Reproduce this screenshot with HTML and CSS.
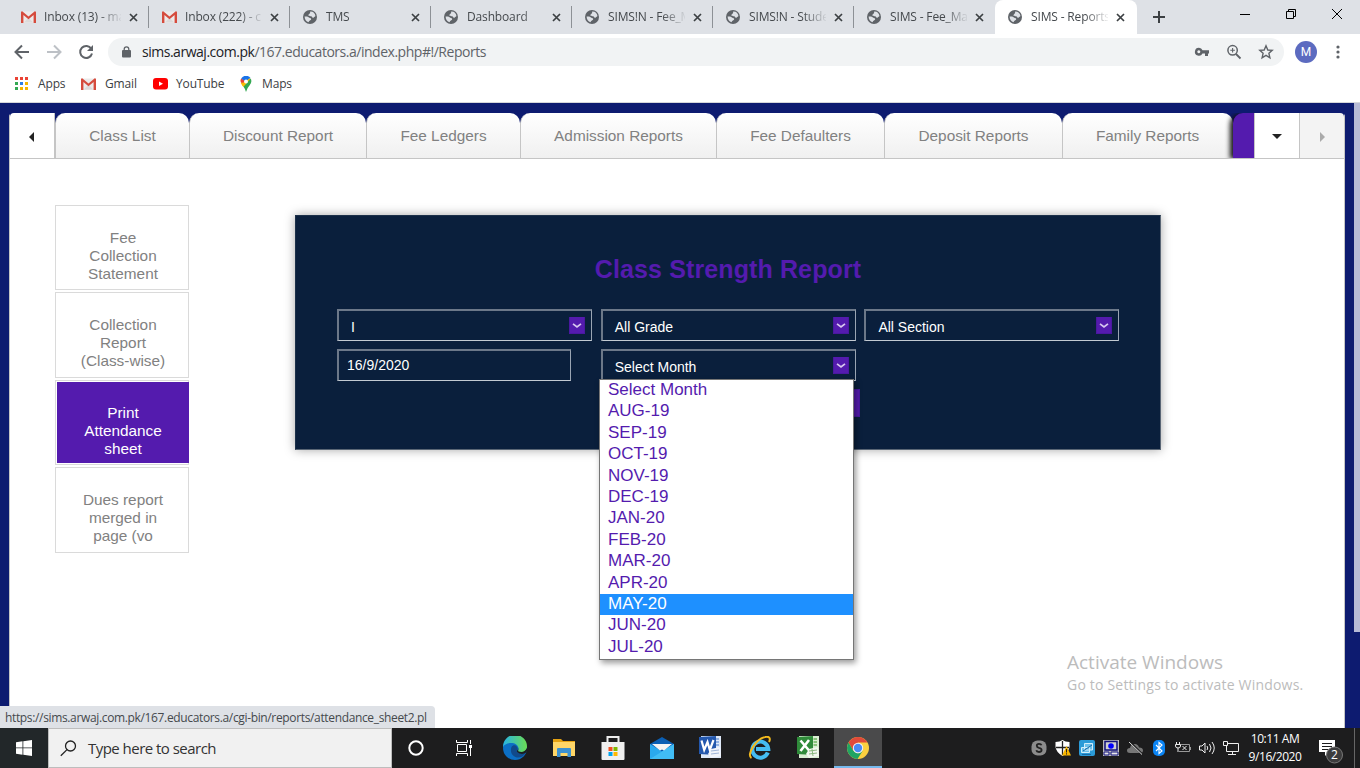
FILE: index.html
```html
<!DOCTYPE html>
<html lang="en">
<head>
<meta charset="utf-8">
<title>SIMS - Reports</title>
<link rel="stylesheet" href="styles.css">
</head>
<body>
<svg class="defs" width="0" height="0">
  <symbol id="globe" viewBox="0 0 14 14"><circle cx="7" cy="7" r="7" fill="#5f6368"/><path d="M7.200 1.600C10 1.300 12.200 3.500 12.400 5.800 12.400 7 11.600 6.400 10.800 7.400 9.800 8.200 8.600 7.200 8.600 6.200 7.400 6.200 6 6.400 5.400 5.600 5.200 4 7.400 4.200 7.200 1.600ZM1.600 6.600C3.600 6.200 5.400 6.800 6.200 7.800 7.800 8 8.600 8.600 8 9.800 7 10.600 6 10.600 5.600 12.300 3.200 11.600 1.600 9.400 1.600 6.600Z" fill="#dee1e6"/></symbol>
  <symbol id="gmail" viewBox="0 0 15 12"><path d="M1 .5H14V12H1Z" fill="#eceaea"/><path d="M3 11.500 7.500 6.500 12 11.500Z" fill="#dcdada"/><path d="M0 1.200Q0 .2 1.200 .2L7.500 5.600 13.800 .2Q15 .2 15 1.200V12H12.600V4L7.500 8.200 2.400 4V12H0Z" fill="#d54b3d"/></symbol>
  <symbol id="close" viewBox="0 0 9 9"><path d="M1 1 8 8M8 1 1 8" stroke="#3c4043" stroke-width="1.700" fill="none"/></symbol>
  <symbol id="chev" viewBox="0 0 16 17"><rect width="16" height="17" fill="#4a18a0"/><rect x="1" width="14" height="16" fill="#541bae"/><path d="M4 6.800 8 10 12 6.800" fill="none" stroke="#d8c8f0" stroke-width="1.700"/></symbol>
</svg>

<div class="tabstrip">
  <div class="tab"><svg class="fav mail"><use href="#gmail"/></svg><span class="tab-title">Inbox (13) - ma</span><svg class="x"><use href="#close"/></svg></div>
  <div class="tab"><svg class="fav mail"><use href="#gmail"/></svg><span class="tab-title">Inbox (222) - c</span><svg class="x"><use href="#close"/></svg></div>
  <div class="tab"><svg class="fav"><use href="#globe"/></svg><span class="tab-title">TMS</span><svg class="x"><use href="#close"/></svg></div>
  <div class="tab"><svg class="fav"><use href="#globe"/></svg><span class="tab-title">Dashboard</span><svg class="x"><use href="#close"/></svg></div>
  <div class="tab"><svg class="fav"><use href="#globe"/></svg><span class="tab-title">SIMS!N - Fee_M</span><svg class="x"><use href="#close"/></svg></div>
  <div class="tab"><svg class="fav"><use href="#globe"/></svg><span class="tab-title">SIMS!N - Stude</span><svg class="x"><use href="#close"/></svg></div>
  <div class="tab plain"><svg class="fav"><use href="#globe"/></svg><span class="tab-title">SIMS - Fee_Ma</span><svg class="x"><use href="#close"/></svg></div>
  <div class="tab active"><svg class="fav"><use href="#globe"/></svg><span class="tab-title">SIMS - Reports</span><svg class="x"><use href="#close"/></svg></div>
  <svg class="newtab" viewBox="0 0 12 12"><path d="M6 0V12M0 6H12" stroke="#3c4043" stroke-width="2"/></svg>
  <div class="winctl">
    <svg width="46" height="28"><path d="M18 14.500H28" stroke="#000"/></svg>
    <svg width="46" height="28"><path d="M18.500 11.500H25.500V18.500H18.500ZM20.500 11V9.500H27.500V16.500H26" stroke="#000" fill="none"/></svg>
    <svg width="46" height="28"><path d="M18 9 28 19M28 9 18 19" stroke="#000" fill="none"/></svg>
  </div>
</div>

<div class="toolbar">
  <svg class="nav" viewBox="0 0 16 16"><path d="M15 8H2M8 1.500 1.500 8 8 14.500" stroke="#5f6368" stroke-width="2" fill="none"/></svg>
  <svg class="nav" viewBox="0 0 16 16"><path d="M1 8H14M8 1.500 14.500 8 8 14.500" stroke="#bdc1c6" stroke-width="2" fill="none"/></svg>
  <svg class="nav" viewBox="0 0 16 16"><path d="M13.300 4.800A6 6 0 1 0 14 9.500" stroke="#5f6368" stroke-width="2" fill="none"/><path d="M15 1V7H9Z" fill="#5f6368"/></svg>
  <div class="omnibox">
    <svg width="9" height="12" viewBox="0 0 9 12"><path d="M2.200 5V3.200a2.300 2.300 0 0 1 4.600 0V5" stroke="#5f6368" stroke-width="1.300" fill="none"/><rect y="4" width="9" height="7.500" rx="1" fill="#5f6368"/></svg>
    <span class="url"><b>sims.arwaj.com.pk</b>/167.educators.a/index.php#!/Reports</span>
    <svg width="16" height="16" viewBox="0 0 16 16"><path fill="#5f6368" fill-rule="evenodd" d="M5 3.800a4 4 0 0 1 3.500 2.500H15V9.500H14V12H11V9.500H8.500A4 4 0 1 1 5 3.800ZM4.800 6.300a1.500 1.500 0 1 0 .01 0Z"/></svg>
    <svg width="16" height="16" viewBox="0 0 16 16"><g fill="none" stroke="#5f6368"><circle cx="6.600" cy="6.300" r="4.700" stroke-width="1.500"/><path d="M10 10 14.500 14.500" stroke-width="1.800"/><path d="M6.600 4V8.600M4.300 6.300H8.900" stroke-width="1.100"/></g></svg>
    <svg width="16" height="16" viewBox="0 0 16 16"><path d="M8 1.800 9.800 6 14.200 6.400 10.900 9.300 11.900 13.800 8 11.400 4.100 13.800 5.100 9.300 1.800 6.400 6.200 6Z" fill="none" stroke="#5f6368" stroke-width="1.400"/></svg>
  </div>
  <div class="avatar">M</div>
  <svg class="kebab" viewBox="0 0 4 14"><g fill="#5f6368"><circle cx="2" cy="2" r="1.600"/><circle cx="2" cy="7" r="1.600"/><circle cx="2" cy="12" r="1.600"/></g></svg>
</div>

<div class="bookmarks">
  <svg width="13" height="13" viewBox="0 0 13 13"><path d="M0 0h3v3H0zM5 0h3v3H5zM10 0h3v3h-3z" fill="#ea4335"/><path d="M0 5h3v3H0z" fill="#34a853"/><path d="M5 5h3v3H5z" fill="#2b7de9"/><path d="M10 5h3v3h-3zM5 10h3v3H5zM10 10h3v3h-3z" fill="#f5b400"/><path d="M0 10h3v3H0z" fill="#34a853"/></svg><span class="bm apps">Apps</span>
  <svg width="15" height="12"><use href="#gmail"/></svg><span class="bm gm">Gmail</span>
  <svg width="15" height="12" viewBox="0 0 15 12"><rect width="15" height="11.500" rx="3" fill="#f00"/><path d="M6 3.500V8L10 5.750Z" fill="#fff"/></svg><span class="bm yt">YouTube</span>
  <svg width="12" height="16" viewBox="0 0 12 16"><path d="M1.300 2.500 6 5 3 8.500Q0 6 .5 4Z" fill="#ea4335"/><path d="M1.200 2.500A5.600 5.600 0 0 1 10.500 2L6 6Z" fill="#1a73e8"/><path d="M.8 7Q2 10 4 11L10.800 3Q9 1 6 6Z" fill="#fbbc04"/><path d="M10.700 2.500Q12.500 6 9.500 9.500 7 12 6 16 5.300 13 3.500 10.800Z" fill="#34a853"/><circle cx="6" cy="5.600" r="2" fill="#fff"/></svg><span class="bm">Maps</span>
</div>

<main class="page">
  <section class="sheet">
    <nav class="report-tabs">
      <div class="scroll left"><i class="tri tri-left"></i></div>
      <div class="rtab w1">Class List</div>
      <div class="rtab w2">Discount Report</div>
      <div class="rtab w3">Fee Ledgers</div>
      <div class="rtab w4">Admission Reports</div>
      <div class="rtab w5">Fee Defaulters</div>
      <div class="rtab w6">Deposit Reports</div>
      <div class="rtab w7">Family Reports</div>
      <div class="rtab-current"></div>
      <div class="scroll"><i class="tri tri-down"></i></div>
      <div class="scroll off"><i class="tri tri-right"></i></div>
    </nav>
    <div class="content">
      <aside class="side">
        <a class="side-item">Fee<br>Collection<br>Statement</a>
        <a class="side-item">Collection<br>Report<br>(Class-wise)</a>
        <a class="side-item on"><span>Print<br>Attendance<br>sheet</span></a>
        <a class="side-item">Dues report<br>merged in<br>page (vo</a>
      </aside>
      <form class="panel">
        <h1 class="panel-title">Class Strength Report</h1>
        <div class="fields">
          <div class="field">I<svg><use href="#chev"/></svg></div>
          <div class="field">All Grade<svg><use href="#chev"/></svg></div>
          <div class="field">All Section<svg><use href="#chev"/></svg></div>
          <div class="field text">16/9/2020</div>
          <div class="field">Select Month<svg><use href="#chev"/></svg>
            <ul class="options">
              <li>Select Month</li><li>AUG-19</li><li>SEP-19</li><li>OCT-19</li><li>NOV-19</li><li>DEC-19</li><li>JAN-20</li><li>FEB-20</li><li>MAR-20</li><li>APR-20</li><li class="hover">MAY-20</li><li>JUN-20</li><li>JUL-20</li>
            </ul>
          </div>
        </div>
        <div class="submit"></div>
      </form>
    </div>
  </section>
  <div class="scrollbar"></div>
  <div class="status">https://sims.arwaj.com.pk/167.educators.a/cgi-bin/reports/attendance_sheet2.pl</div>
  <div class="watermark"><div class="wm1">Activate Windows</div><div class="wm2">Go to Settings to activate Windows.</div></div>
</main>

<footer class="taskbar">
  <div class="start"><svg width="16" height="16" viewBox="0 0 16 16"><path d="M0 2.300 6.500 1.300V7.500H0ZM7.300 1.200 16 0V7.500H7.300ZM0 8.300H6.500V14.700L0 13.700ZM7.300 8.300H16V16L7.300 14.800Z" fill="#fff"/></svg></div>
  <div class="search"><svg width="17" height="17" viewBox="0 0 17 17"><circle cx="10.500" cy="6" r="5" fill="none" stroke="#222" stroke-width="1.300"/><path d="M7 9.600 .8 15.800" stroke="#222" stroke-width="1.300"/></svg><span>Type here to search</span></div>
  <div class="tb"><svg width="16" height="16" viewBox="0 0 16 16"><circle cx="8" cy="8" r="6.700" fill="none" stroke="#fff" stroke-width="2"/></svg></div>
  <div class="tb"><svg width="17" height="16" viewBox="0 0 17 16"><path d="M.5 0V2.500H11.500V0M.5 16V13.500H11.500V16M1.500 4.500H10.500V11.500H1.500ZM14.500 0V4M14.500 8V16" fill="none" stroke="#fff"/><path d="M13 5h3v3h-3z" fill="#fff"/></svg></div>
  <div class="apps-row">
    <div class="app"><svg width="24" height="24" viewBox="0 0 24 24"><defs><linearGradient id="eg"><stop offset="0" stop-color="#27b3e5"/><stop offset="1" stop-color="#6bdc53"/></linearGradient></defs><circle cx="12" cy="12" r="12" fill="#0c6fc5"/><path d="M0 11A12 12 0 0 1 24 10.500C24 15 20 17.500 15.500 16 14 15.500 15.500 14 15.500 12.500 15.300 9 12 7 8 7 4 7 1 9 0 11Z" fill="url(#eg)"/><path d="M8.500 11C10 8.500 13 9 14 11 16 13 13 14 14.500 16 17 18.500 21 17 22.800 16.700 20 21 16 22.500 12.500 21 8.500 19.500 7 15 8.500 11Z" fill="#114a8b"/><path d="M15.400 11.500C15.400 14 13 15 14.500 16.300 18 19 21.500 17.600 22.800 16.800L24 15 24 12C22 16 19 16.500 15.700 15.500 14.800 15 15.500 13.500 15.400 11.500Z" fill="#1d1d1e"/></svg></div>
    <div class="app"><svg width="22" height="20" viewBox="0 0 22 20"><path d="M0 1H8L10 3H22V18H0Z" fill="#e5a212"/><path d="M0 4H22V18H0Z" fill="#ffd667"/><path d="M4 19V11Q4 10 5 10H17Q18 10 18 11V19H14.500V15H7.500V19Z" fill="#3c91d0"/></svg></div>
    <div class="app"><svg width="24" height="24" viewBox="0 0 24 24"><path d="M6.500 7V1H17.500V7" fill="none" stroke="#eee" stroke-width="2"/><path d="M.5 6H23.500V23Q23.500 24 22.500 24H1.500Q.5 24 .5 23Z" fill="#f0f0f0"/><path d="M7.500 11h4v4h-4z" fill="#f25022"/><path d="M12.500 11h4v4h-4z" fill="#7fba00"/><path d="M7.500 16h4v4h-4z" fill="#00a4ef"/><path d="M12.500 16h4v4h-4z" fill="#ffb900"/></svg></div>
    <div class="app"><svg width="24" height="22" viewBox="0 0 24 22"><path d="M0 7 12 0 24 7V15H0Z" fill="#0b5fb4"/><path d="M0 7 12 14.500 24 7V22H0Z" fill="#2aa9ee"/><path d="M0 22 12 14.500 24 7V22Z" fill="#41bdf5"/><path d="M2 7H22L14 13.500 12 12.500 10 13.500Z" fill="#f4f4f4"/></svg></div>
    <div class="app"><svg class="up" width="22" height="22" viewBox="0 0 22 22"><path d="M2 0H22V22H2Z" fill="#dfe9f8"/><path d="M16.500 3H20M16.500 6H20M16.500 9H20" stroke="#7aa0dc" stroke-width="1.500"/><path d="M0 1 17 0V19L0 18Z" fill="#2458ae"/><path d="M2.500 4.500 5.200 14 8.500 6 10.800 14 14.500 4" fill="none" stroke="#fff" stroke-width="2.200"/><path d="M12 13 21 11 22 20 12 22 9 18Z" fill="#f1f4fb"/><path d="M12 15 20 14M12 18 20 17" stroke="#9eb4d8"/></svg></div>
    <div class="app"><svg width="24" height="24" viewBox="0 0 24 24"><path d="M19.800 16.500A8 8 0 1 1 20.300 13H8" fill="none" stroke="#45bdf2" stroke-width="4"/><path d="M3.500 22C-2 19 8 3 17 1 21 0 23 2 21 6" fill="none" stroke="#f2b91d" stroke-width="2"/></svg></div>
    <div class="app"><svg class="up" width="22" height="22" viewBox="0 0 22 22"><path d="M2 0H22V22H2Z" fill="#d9eed2"/><path d="M16.500 3H20M16.500 6H20M16.500 9H20" stroke="#6cb45d" stroke-width="1.500"/><path d="M0 1 16 0V19L0 18Z" fill="#2f8b3a"/><path d="M3.500 4.500 12.500 15M12 4 3.500 15" fill="none" stroke="#fff" stroke-width="2.600"/><path d="M12 13 21 11 22 20 12 22 9 18Z" fill="#f2f8ef"/><path d="M12 15 20 14M12 18 20 17M15 13 16 20" stroke="#89b87f"/></svg></div>
    <div class="app running"><svg width="22" height="22" viewBox="0 0 22 22"><circle cx="11" cy="11" r="11" fill="#fbd03f"/><path d="M1.500 5.500A11 11 0 0 1 20.500 5.500H11L6.300 13.700Z" fill="#e04a3a"/><path d="M1.500 5.500A11 11 0 0 0 10.500 22L15.700 13.700 11 16.400 6.300 13.700Z" fill="#1fa463"/><circle cx="11" cy="11" r="5.200" fill="#f3f3f3"/><circle cx="11" cy="11" r="4.200" fill="#4a8af4"/></svg></div>
  </div>
  <div class="tray">
    <svg viewBox="0 0 16 16"><rect x=".5" y=".5" width="15" height="15" rx="6" fill="#8c8c8c"/><path d="M10.500 5.300Q10 3.800 8 3.800 5.800 3.800 5.800 5.700 5.800 7.300 8 7.800 10.700 8.300 10.600 10.200 10.400 12 8 12 5.700 12 5.300 10.300" fill="none" stroke="#222" stroke-width="1.800"/></svg>
    <svg viewBox="0 0 16 16"><path d="M7.500 0Q10 2 14.500 2V7Q14 12 7.500 16 1 12 .5 7V2Q5 2 7.500 0Z" fill="#fff"/><path d="M7.500 1V15M1 7.500H14" stroke="#222" stroke-width="1.300"/><path d="M11.500 6 16 15.500H7Z" fill="#f8b600"/><path d="M11.500 9V12.500M11.500 13.300V14.500" stroke="#222"/></svg>
    <svg viewBox="0 0 16 16"><rect width="16" height="16" rx="2" fill="#2b9bd8"/><path d="M5.500 3.500H13.500V10H5.500ZM2.500 7.500H10.500V12.500H2.500Z" fill="#6cc0ea" stroke="#d3effb"/><path d="M4 11 13 5M3 14.500H12" stroke="#1769a8"/></svg>
    <svg viewBox="0 0 16 16"><path d="M0 0H16V16H0Z" fill="#bcbcbc"/><path d="M2 1.500H14V10H2Z" fill="#d0d0d0" stroke="#10107c" stroke-width="1.500"/><circle cx="8" cy="6" r="2.800" fill="#00f"/><path d="M1 12H6V15H1ZM8 12H15V15H8Z" fill="#e8e8e8" stroke="#10107c"/></svg>
    <svg viewBox="0 0 16 16"><path d="M3 13Q0 13 0 10.500 0 8 3 8 4 3.500 8 4 11 4 12 7.500 16 7.500 16 10.500 16 13 13 13Z" fill="#777"/><path d="M3 2 15 14" stroke="#1d1d1e" stroke-width="2"/><path d="M2 2 15 14.500" stroke="#ddd"/></svg>
    <svg viewBox="0 0 16 16"><rect x="2" width="12" height="16" rx="5" fill="#0a84f4"/><path d="M5 5 11 11 8 13.500V2.500L11 5 5 11" fill="none" stroke="#fff" stroke-width="1.100"/></svg>
    <svg viewBox="0 0 16 16"><g fill="none"><path d="M6 4.500H14.500V11.500H4M15.500 7V10" stroke="#999"/><path d="M1.500 2V4.500M4.500 2V4.500M.5 4.500H5.500V6Q5.500 8 3 8 .5 8 .5 6V4.500M3 8V12M7.500 6 11.500 10M11.500 6 7.500 10" stroke="#eee"/></g></svg>
    <svg viewBox="0 0 16 16"><g fill="none" stroke="#eee"><path d="M0.500 6H3L6 3V13L3 10H.5ZM8 6Q9.500 8 8 10M10.500 4Q13.500 8 10.500 12M13 2Q17.500 8 13 14"/></g></svg>
    <svg viewBox="0 0 16 16"><g fill="none" stroke="#eee"><path d="M4.500 3.500H15.500V11.500H3.500V6M9.500 12V14.500M5 14.500H13M.5 1.500H4.500V5.500H.5Z"/></g></svg>
  </div>
  <div class="clock"><div class="time">10:11 AM</div><div class="date">9/16/2020</div></div>
  <div class="notify"><svg width="26" height="26" viewBox="0 0 26 26"><path d="M1 1H17V13H11L7 17V13H1Z" fill="#fff"/><path d="M4 4.500H14M4 7.500H14M4 10.500H10" stroke="#1d1d1e"/><circle cx="16.500" cy="16" r="8" fill="#3c3c3d" stroke="#777"/></svg><span class="badge">2</span></div>
  <div class="desk"></div>
</footer>
</body>
</html>
```
FILE: styles.css
```css
* { box-sizing: border-box; }
html, body { margin: 0; width: 1360px; height: 768px; overflow: hidden; }
body { display: flex; flex-direction: column; background: #fff; font-family: "Open Sans", "Noto Sans", sans-serif; }
.defs { position: absolute; }
svg { display: block; flex: none; }

.tabstrip { height: 34px; background: #dee1e6; display: flex; align-items: flex-start; padding-left: 8px; flex: none; }
.tab { width: 141px; height: 34px; padding-left: 13px; display: flex; align-items: center; border-right: 1px solid #8d9196; border-image: linear-gradient(#dee1e6 7px, #8d9196 7px, #8d9196 27px, #dee1e6 27px) 1; border-width: 0 1px 0 0; }
.tab.plain { border-color: transparent; border-image: none; }
.tab.active { width: 142px; background: #fff; border: 0; border-radius: 8px 8px 0 0; }
.fav { width: 14px; height: 14px; margin-right: 9px; }
.fav.mail { height: 12px; width: 15px; margin-right: 8px; }
.tab-title { width: 77px; font-size: 12px; letter-spacing: -0.15px; line-height: 16px; color: #45494d; white-space: nowrap; -webkit-mask-image: linear-gradient(90deg, #000 54px, transparent 79px); mask-image: linear-gradient(90deg, #000 54px, transparent 79px); }
.x { width: 9px; height: 9px; margin-left: 8px; }
.newtab { width: 12px; height: 12px; margin: 11px 0 0 16px; }
.winctl { display: flex; margin-left: auto; }

.toolbar { height: 36px; display: flex; align-items: center; padding-left: 14px; flex: none; }
.nav { width: 16px; height: 16px; margin-right: 16px; }
.omnibox { width: 1176px; height: 28px; margin-left: -2px; border-radius: 14px; background: #f1f3f4; display: flex; align-items: center; padding: 0 10px 0 14px; gap: 16px; }
.url { flex: 1; margin-left: -5px; padding-bottom: 1px; font-size: 14px; letter-spacing: -0.480px; color: #5f6368; white-space: nowrap; }
.url b { font-weight: 400; color: #202124; }
.avatar { width: 22px; height: 22px; margin-left: 11px; border-radius: 50%; background: #5c6bc0; color: #fff; font: 12px/22px Roboto, sans-serif; text-align: center; }
.kebab { width: 4px; height: 14px; margin-left: 19px; }
.bookmarks { height: 33px; border-bottom: 1px solid #d5d7da; display: flex; align-items: center; padding: 0 0 5px 15px; flex: none; }
.bm { font-size: 12px; letter-spacing: -0.150px; color: #3c4043; margin-left: 10px; }
.bm.apps { width: 43px; }
.bm.gm { margin-left: 9px; width: 48px; }
.bm.yt { margin-left: 8px; width: 64px; }

.page { flex: 1; background: #0d1b70; position: relative; display: flex; padding: 10px 0 0 9px; min-height: 0; }
.sheet { width: 1336px; background: #fff; border: 1px solid #c5c5c5; border-bottom: 0; border-top: 0; border-radius: 4px 4px 0 0; display: flex; flex-direction: column; font-family: "Liberation Sans", Arial, sans-serif; }
.scrollbar { width: 6px; height: 529px; margin: -10px 0 0 9px; background: #b6bad6; }
.report-tabs { height: 46px; display: flex; border-bottom: 1px solid #c5c5c5; background: #0d1b70; font-size: 15.350px; color: #818181; }
.scroll { width: 45px; height: 45px; background: #fff; display: flex; align-items: center; justify-content: center; border-left: 1px solid #c5c5c5; }
.scroll.left { border-left: 0; border-right: 1px solid #c5c5c5; border-radius: 4px 0 0 0; }
.scroll.off { background: #f3f3f3; border-radius: 0 4px 0 0; width: 45px; }
.tri { border: 5px solid transparent; }
.tri-left { border-right-color: #222; border-left: 0; margin: 3px 2px 0 0; }
.tri-right { border-left-color: #aaa; border-right: 0; margin-top: 3px; }
.tri-down { border-top-color: #222; border-bottom: 0; margin-top: 2px; }
.rtab { height: 45px; line-height: 46px; text-align: center; background: linear-gradient(#fff, #f0f0f0); border-left: 1px solid #c5c5c5; border-radius: 10px 10px 0 0; }
.w1 { width: 134px; } .w2 { width: 177px; } .w3 { width: 154px; } .w4 { width: 196px; } .w5 { width: 168px; } .w6 { width: 178px; } .w7 { width: 171px; padding-right: 1px; }
.rtab-current { width: 21px; height: 45px; background: #541bae; border-radius: 10px 0 0 0; box-shadow: -3px 1px 5px #111; clip-path: inset(0 0 0 -10px); position: relative; }

.content { display: flex; padding: 46px 0 0 45px; }
.side { width: 134px; display: flex; flex-direction: column; gap: 2px; }
.side-item { height: 85.400px; border: 1px solid #dadada; padding-top: 23px; color: #818181; font-size: 15.350px; line-height: 18px; text-align: center; padding-left: 2px; }
.side-item.on { padding: 1px 0 1px 1px; color: #fff; }
.side-item.on span { display: block; height: 81px; width: 132px; padding-top: 22px; background: #541bae; }
.panel { width: 866px; height: 235px; margin: 10px 0 0 106px; background: #0a1f3c; border: 1px solid #5a6675; border-top-color: #1c3049; border-left-color: #1c3049; box-shadow: 0 0 10px rgba(0,0,0,.350); padding: 39px 0 0 41px; }
.panel-title { margin: 0 41px 26px 0; font-size: 25px; line-height: 28px; letter-spacing: 0.120px; text-align: center; color: #541bae; }
.fields { display: grid; grid-template-columns: repeat(3, 255px); gap: 8px 8.700px; }
.field { position: relative; height: 32px; border: 2px solid #6c7889; border-right: 1px solid #9aa5b3; border-bottom: 1px solid #c3cad2; padding: 3px 6px 0 12px; display: flex; justify-content: space-between; align-items: center; color: #fff; font-size: 14px; }
.field svg { width: 16px; height: 17px; margin-top: -4px; }
.field.text { width: 234px; padding: 0 0 1px 8px; }
.options { position: absolute; left: -3.700px; top: 28px; width: 255px; height: 281px; margin: 0; padding: 0; list-style: none; background: #fff; border: 1px solid #767676; box-shadow: 2px 3px 6px rgba(0,0,0,.4); color: #541bae; font-size: 17px; line-height: 19px; z-index: 2; }
.options li { height: 21.400px; padding-left: 8px; }
.options .hover { background: #1e90ff; color: #fff; }
.submit { width: 257px; height: 28px; margin: 8px 0 0 266px; background: #541bae; border: 1px solid #4718a0; }

.status { position: absolute; left: 0; bottom: 0; width: 435px; height: 22px; background: #dee1e6; border-radius: 0 4px 0 0; padding: 1px 0 0 5px; font-size: 12px; line-height: 21px; letter-spacing: -0.350px; color: #45494d; white-space: nowrap; }
.watermark { position: absolute; left: 1067px; top: 547px; color: #bcbcbc; white-space: nowrap; }
.wm1 { font-size: 19px; line-height: 25px; }
.wm2 { font-size: 14px; line-height: 20px; letter-spacing: 0.200px; }

.taskbar { height: 40px; flex: none; background: #1d1d1e; display: flex; color: #fff; }
.start { width: 48px; background: #222729; display: flex; align-items: center; justify-content: center; }
.search { width: 344px; background: #f1f1f1; border: 1px solid #bdbdbd; display: flex; align-items: center; padding-left: 11px; color: #333; font-size: 15px; }
.search span { margin-left: 11px; letter-spacing: -0.530px; }
.tb { width: 48px; display: flex; align-items: center; justify-content: center; }
.apps-row { display: flex; margin-left: 2px; }
.app { width: 49px; display: flex; align-items: center; justify-content: center; }
.app .up { margin: -3px 2px 0 0; }
.app.running { background: #4a4a4b; border-bottom: 2px solid #76b9ed; padding-top: 2px; width: 48px; margin-left: 1px; }
.tray { display: flex; align-items: center; gap: 8px; margin-left: 149px; }
.tray svg { width: 16px; height: 16px; }
.clock { width: 72px; text-align: center; font-size: 12px; line-height: 18px; padding-top: 2px; letter-spacing: -0.450px; white-space: nowrap; }
.notify { position: relative; width: 26px; margin: 11px 0 0 7px; }
.badge { position: absolute; left: 13px; top: 7px; font-size: 12px; line-height: 18px; }
.desk { width: 1px; background: #666; margin-left: 10px; }
```
